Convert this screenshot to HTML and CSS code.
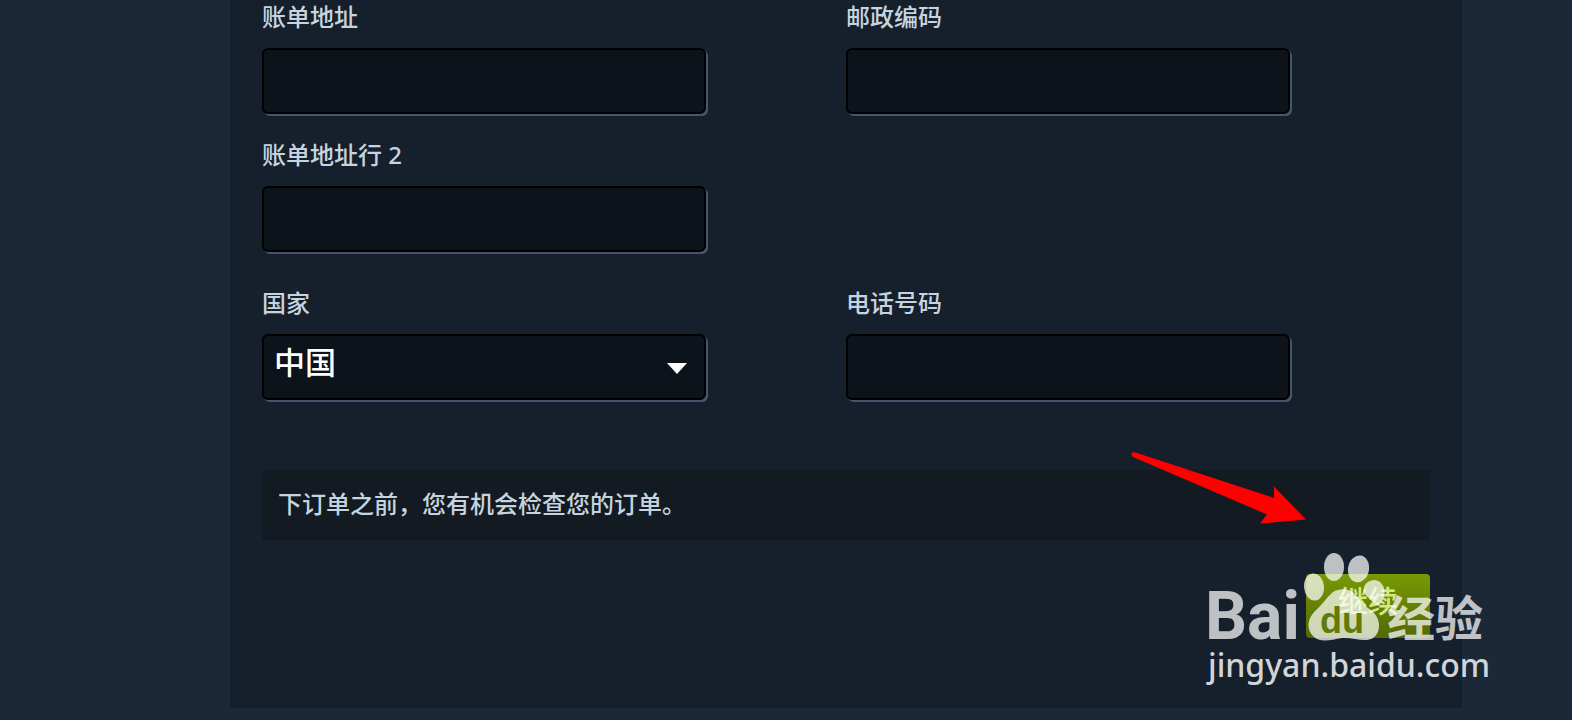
FILE: index.html
```html
<!DOCTYPE html>
<html lang="zh-CN">
<head>
	<meta charset="UTF-8">
	<title>账单信息</title>
	<link rel="stylesheet" href="styles.css">
</head>
<body>
	<form class="checkout">
		<div class="fields">
			<div class="field">
				<label for="address">账单地址</label>
				<input id="address" type="text">
			</div>
			<div class="field">
				<label for="zip">邮政编码</label>
				<input id="zip" type="text">
			</div>
			<div class="field wide">
				<label for="address2">账单地址行 2</label>
				<input id="address2" type="text">
			</div>
			<div class="field country">
				<label for="country">国家</label>
				<select id="country">
					<option>中国</option>
				</select>
			</div>
			<div class="field country">
				<label for="phone">电话号码</label>
				<input id="phone" type="tel">
			</div>
		</div>
		<p class="notice">下订单之前，您有机会检查您的订单。</p>
		<div class="actions">
			<button class="continue" type="button">继续</button>
		</div>
		<svg class="arrow" width="180" height="76" viewBox="0 0 180 76" aria-hidden="true">
			<path fill="#f00" d="M6 1 L146 47 V35.500 L178 68.500 L132 72.500 L139 63.500 L5 6 Q1 2 6 1z"/>
		</svg>
		<svg class="watermark" width="300" height="144" viewBox="0 0 300 144">
			<g class="mark">
				<ellipse cx="114" cy="37" rx="10" ry="13.500" transform="rotate(-5 114 37)"/>
				<ellipse cx="134" cy="17" rx="10" ry="14"/>
				<ellipse cx="158.500" cy="19" rx="10.500" ry="13.500" transform="rotate(10 159 19)"/>
				<path d="M164 43 C162 35 168 30 175 30 C182 31 186 38 184 46 C183 50 181 54 178 56 C173 52 167 47 164 43z"/>
				<path d="M133 42 C139 38 150 38 155 44 C160 52 167 57 173 62 C181 69 181 83 173 88 C165 93 153 87 142 88 C131 90 121 93 114 87 C106 80 107 69 115 61 C123 54 127 47 133 42z"/>
				<text class="bai" x="5" y="89">Bai</text>
				<text class="jingyan" x="187" y="86">经验</text>
			</g>
			<text class="site" x="8" y="127">jingyan.baidu.com</text>
			<text class="du" x="120" y="83">du</text>
		</svg>
	</form>
</body>
</html>
```

FILE: styles.css
```css
* {
	box-sizing: border-box;
}
body {
	margin: 0;
	background: #1b2838;
	color: #c6d4df;
	font-family: "Noto Sans", "Noto Sans CJK SC", sans-serif;
	font-size: 24px;
	font-weight: 500;
}
.checkout {
	position: relative;
	max-width: 1232px;
	margin: 0 auto 12px 230px;
	padding: 0 32px 70px;
	background: #17202b;
	background: #16202c;
}
.fields {
	display: grid;
	grid-template-columns: 1fr 1fr;
	row-gap: 24px;
}
.wide {
	grid-column: 1 / -1;
	width: 50%;
}
.country {
	padding-top: 10px;
}
.field label {
	display: block;
	margin-bottom: 14px;
	line-height: 34px;
}
.field input,
.field select {
	display: block;
	width: 76%;
	height: 66px;
	padding: 0 10px;
	border: 2px solid #000;
	border-radius: 6px;
	background: #0c131a;
	box-shadow: 2px 2px 0 #45556c;
	color: #fff;
	font: 500 31px "Noto Sans CJK SC", sans-serif;
	outline: none;
}
.field select {
	appearance: none;
	padding-bottom: 14px;
	background: #0c131a url("data:image/svg+xml,%3Csvg xmlns='http://www.w3.org/2000/svg' width='20' height='12'%3E%3Cpath d='M0 0h20L10 11z' fill='white'/%3E%3C/svg%3E") no-repeat right 17px top 27px;
}
.notice {
	margin: 70px 0 34px;
	padding: 15px 16px 17px;
	background: #131a22;
	line-height: 38px;
}
.actions {
	display: flex;
	justify-content: flex-end;
}
.continue {
	height: 64px;
	padding: 0 32px 14px;
	border: 0;
	border-radius: 4px;
	background: linear-gradient(#799905, #536904);
	color: #d2e885;
	font: 500 30px "Noto Sans CJK SC", sans-serif;
}
.arrow {
	position: absolute;
	top: 451px;
	right: 154px;
}
.watermark {
	position: absolute;
	top: 550px;
	right: -38px;
	pointer-events: none;
}
.mark {
	fill: #fff;
	opacity: .72;
}
.bai {
	font: bold 66px Roboto, sans-serif;
}
.jingyan {
	font: bold 48px "Noto Sans CJK SC", sans-serif;
}
.site {
	fill: #d2d5d8;
	font: 500 32px "Noto Sans", sans-serif;
}
.du {
	fill: #5f7c08;
	font: bold 36px "Liberation Sans", sans-serif;
}
```
